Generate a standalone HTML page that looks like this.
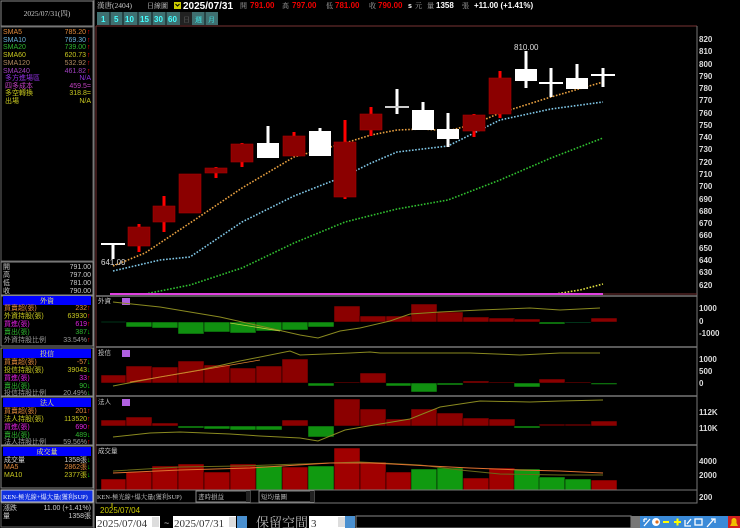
<!DOCTYPE html>
<html><head><meta charset="utf-8"><style>
html,body{margin:0;padding:0;background:#000;width:740px;height:528px;overflow:hidden}
svg{display:block}
text{font-family:"Liberation Sans","Noto Sans CJK TC",sans-serif}
.cj{font-family:"Liberation Serif","Noto Serif CJK SC","Noto Sans CJK TC",serif}
.ax{font-family:"Liberation Serif",serif;font-weight:bold;font-size:8px;fill:#ddd}
</style></head><body>
<svg width="740" height="528" viewBox="0 0 740 528" xmlns="http://www.w3.org/2000/svg" font-size="8">
<rect width="740" height="528" fill="#000"/>
<!-- left panel -->
<rect x="1" y="1" width="92" height="25" fill="#000" stroke="#888"/>
<text x="47" y="16" text-anchor="middle" fill="#ccc" class="cj" font-size="7.5">2025/07/31(四)</text>
<line x1="94" y1="0" x2="94" y2="528" stroke="#888"/>
<rect x="1" y="27" width="92" height="234" fill="none" stroke="#666"/>
<g class="cj" font-size="7">
<text x="3" y="34" fill="#e08a3c">SMA5</text><text x="86" y="34" fill="#e08a3c" text-anchor="end">785.20</text>
<text x="3" y="42" fill="#6ab0d8">SMA10</text><text x="86" y="42" fill="#6ab0d8" text-anchor="end">769.30</text>
<text x="3" y="49" fill="#2fb52f">SMA20</text><text x="86" y="49" fill="#2fb52f" text-anchor="end">739.00</text>
<text x="3" y="57" fill="#c8c820">SMA60</text><text x="86" y="57" fill="#c8c820" text-anchor="end">620.73</text>
<text x="3" y="65" fill="#b08a60">SMA120</text><text x="86" y="65" fill="#b08a60" text-anchor="end">532.92</text>
<text x="3" y="73" fill="#a040c0">SMA240</text><text x="86" y="73" fill="#a040c0" text-anchor="end">461.82</text>
<text x="5" y="80" fill="#9030e0">多方進場區</text><text x="91" y="80" fill="#9030e0" text-anchor="end">N/A</text>
<text x="5" y="88" fill="#c040c0">四多成本</text><text x="91" y="88" fill="#c040c0" text-anchor="end">459.5=</text>
<text x="5" y="95" fill="#c8c820">多空轉換</text><text x="91" y="95" fill="#c8c820" text-anchor="end">318.8=</text>
<text x="5" y="103" fill="#c8c820">出場</text><text x="91" y="103" fill="#c8c820" text-anchor="end">N/A</text>
</g>
<g fill="#f00" font-size="7"><text x="87" y="34">↑</text><text x="87" y="42">↑</text><text x="87" y="49">↑</text><text x="87" y="57">↑</text><text x="87" y="65">↑</text><text x="87" y="73">↑</text></g>
<rect x="1" y="262" width="92" height="33" fill="none" stroke="#888"/>
<g class="cj" font-size="7" fill="#ccc">
<text x="3" y="269">開</text><text x="91" y="269" text-anchor="end">791.00</text>
<text x="3" y="277">高</text><text x="91" y="277" text-anchor="end">797.00</text>
<text x="3" y="285">低</text><text x="91" y="285" text-anchor="end">781.00</text>
<text x="3" y="293">收</text><text x="91" y="293" text-anchor="end">790.00</text>
</g>
<!-- 外資 -->
<rect x="1" y="296" width="92" height="50" fill="none" stroke="#888"/>
<rect x="3" y="296" width="88" height="9" fill="#0000ff"/>
<text x="47" y="303" text-anchor="middle" fill="#ff6" class="cj" font-size="7">外資</text>
<g class="cj" font-size="7">
<text x="4" y="310" fill="#e08a3c">買賣超(張)</text><text x="87" y="310" fill="#e08a3c" text-anchor="end">232</text>
<text x="4" y="318" fill="#c8c820">外資持股(張)</text><text x="87" y="318" fill="#c8c820" text-anchor="end">63930</text>
<text x="4" y="326" fill="#e020e0">買進(張)</text><text x="87" y="326" fill="#e020e0" text-anchor="end">619</text>
<text x="4" y="334" fill="#2fb52f">賣出(張)</text><text x="87" y="334" fill="#2fb52f" text-anchor="end">387</text>
<text x="4" y="342" fill="#999">外資持股比例</text><text x="87" y="342" fill="#999" text-anchor="end">33.54%</text>
</g>
<g font-size="7"><text x="87" y="310" fill="#f00">↑</text><text x="87" y="318" fill="#f00">↑</text><text x="87" y="326" fill="#f00">↑</text><text x="87" y="334" fill="#0c0">↓</text><text x="87" y="342" fill="#f00">↑</text></g>
<!-- 投信 -->
<rect x="1" y="348" width="92" height="48" fill="none" stroke="#888"/>
<rect x="3" y="349" width="88" height="9" fill="#0000ff"/>
<text x="47" y="356" text-anchor="middle" fill="#ff6" class="cj" font-size="7">投信</text>
<g class="cj" font-size="7">
<text x="4" y="364" fill="#e08a3c">買賣超(張)</text><text x="87" y="364" fill="#e08a3c" text-anchor="end">-57</text>
<text x="4" y="372" fill="#c8c820">投信持股(張)</text><text x="87" y="372" fill="#c8c820" text-anchor="end">39043</text>
<text x="4" y="380" fill="#e020e0">買進(張)</text><text x="87" y="380" fill="#e020e0" text-anchor="end">33</text>
<text x="4" y="388" fill="#2fb52f">賣出(張)</text><text x="87" y="388" fill="#2fb52f" text-anchor="end">90</text>
<text x="4" y="395" fill="#999">投信持股比例</text><text x="87" y="395" fill="#999" text-anchor="end">20.49%</text>
</g>
<g font-size="7"><text x="87" y="364" fill="#0c0">↓</text><text x="87" y="372" fill="#0c0">↓</text><text x="87" y="380" fill="#f00">↑</text><text x="87" y="388" fill="#0c0">↓</text><text x="87" y="395" fill="#0c0">↓</text></g>
<!-- 法人 -->
<rect x="1" y="397" width="92" height="48" fill="none" stroke="#888"/>
<rect x="3" y="398" width="88" height="9" fill="#0000ff"/>
<text x="47" y="405" text-anchor="middle" fill="#ff6" class="cj" font-size="7">法人</text>
<g class="cj" font-size="7">
<text x="4" y="413" fill="#e08a3c">買賣超(張)</text><text x="87" y="413" fill="#e08a3c" text-anchor="end">201</text>
<text x="4" y="421" fill="#c8c820">法人持股(張)</text><text x="87" y="421" fill="#c8c820" text-anchor="end">113520</text>
<text x="4" y="429" fill="#e020e0">買進(張)</text><text x="87" y="429" fill="#e020e0" text-anchor="end">690</text>
<text x="4" y="437" fill="#2fb52f">賣出(張)</text><text x="87" y="437" fill="#2fb52f" text-anchor="end">489</text>
<text x="4" y="444" fill="#999">法人持股比例</text><text x="87" y="444" fill="#999" text-anchor="end">59.56%</text>
</g>
<g font-size="7"><text x="87" y="413" fill="#f00">↑</text><text x="87" y="421" fill="#f00">↑</text><text x="87" y="429" fill="#f00">↑</text><text x="87" y="437" fill="#0c0">↓</text><text x="87" y="444" fill="#f00">↑</text></g>
<!-- 成交量 -->
<rect x="1" y="446" width="92" height="42" fill="none" stroke="#888"/>
<rect x="3" y="447" width="88" height="9" fill="#0000ff"/>
<text x="47" y="454" text-anchor="middle" fill="#ff6" class="cj" font-size="7">成交量</text>
<g class="cj" font-size="7">
<text x="4" y="462" fill="#ccc">成交量</text><text x="87" y="462" fill="#ccc" text-anchor="end">1358張</text>
<text x="4" y="469" fill="#e08a3c">MA5</text><text x="87" y="469" fill="#e08a3c" text-anchor="end">2862張</text>
<text x="4" y="477" fill="#c8c820">MA10</text><text x="87" y="477" fill="#c8c820" text-anchor="end">2377張</text>
</g>
<g font-size="7" fill="#0c0"><text x="87" y="462">↓</text><text x="87" y="469">↓</text><text x="87" y="477">↓</text></g>
<rect x="1" y="490" width="92" height="12" fill="#1030e0" stroke="#ccc"/>
<text x="3" y="499" fill="#fff" class="cj" font-size="6.3">KEN-極光線+爆大量(獲利SUP)</text>
<rect x="1" y="503" width="92" height="24" fill="none" stroke="#666"/>
<g class="cj" font-size="7" fill="#ccc"><text x="3" y="510">漲跌</text><text x="91" y="510" text-anchor="end">11.00 (+1.41%)</text><text x="3" y="518">量</text><text x="91" y="518" text-anchor="end">1358張</text></g>

<!-- top bar -->
<text x="97" y="8" fill="#ccc" class="cj" font-size="7.5">漢唐(2404)</text>
<text x="147" y="8" fill="#ccc" class="cj" font-size="7">日線圖</text>
<rect x="174" y="2" width="7" height="7" fill="#cc0"/><path d="M175.5 4 L177.5 6 L179.5 4" stroke="#000" fill="none"/>
<text x="183" y="9" fill="#fff" font-weight="bold" font-size="10">2025/07/31</text>
<text x="240" y="8" fill="#aaa" class="cj" font-size="7">開</text>
<text x="250" y="8" fill="#e00" font-weight="bold" font-size="8">791.00</text>
<text x="282" y="8" fill="#aaa" class="cj" font-size="7">高</text>
<text x="292" y="8" fill="#e00" font-weight="bold" font-size="8">797.00</text>
<text x="326" y="8" fill="#aaa" class="cj" font-size="7">低</text>
<text x="335" y="8" fill="#e00" font-weight="bold" font-size="8">781.00</text>
<text x="369" y="8" fill="#aaa" class="cj" font-size="7">收</text>
<text x="378" y="8" fill="#e00" font-weight="bold" font-size="8">790.00</text>
<text x="408" y="8" fill="#fff" font-weight="bold" font-size="7">s</text>
<text x="415" y="8" fill="#aaa" class="cj" font-size="7">元</text>
<text x="427" y="8" fill="#aaa" class="cj" font-size="7">量</text>
<text x="436" y="8" fill="#fff" font-weight="bold" font-size="8">1358</text>
<text x="462" y="8" fill="#aaa" class="cj" font-size="7">張</text>
<text x="474" y="8" fill="#fff" font-weight="bold" font-size="8">+11.00 (+1.41%)</text>
<!-- buttons -->
<g font-size="8" font-weight="bold" fill="#4ff">
<rect x="97" y="12" width="83" height="13" fill="#3f6f70"/>
<rect x="180" y="12" width="12" height="13" fill="#222"/>
<rect x="192" y="12" width="26" height="13" fill="#3f6f70"/>
<g stroke="#000" stroke-width="0.8"><line x1="110" y1="12" x2="110" y2="25"/><line x1="123" y1="12" x2="123" y2="25"/><line x1="138" y1="12" x2="138" y2="25"/><line x1="152" y1="12" x2="152" y2="25"/><line x1="166" y1="12" x2="166" y2="25"/><line x1="205" y1="12" x2="205" y2="25"/></g>
<text x="101" y="22">1</text><text x="114" y="22">5</text><text x="125" y="22">10</text><text x="140" y="22">15</text><text x="154" y="22">30</text><text x="168" y="22">60</text>
<text x="183" y="22" fill="#666" class="cj" font-weight="normal" font-size="7">日</text>
<text x="195" y="22" class="cj" font-weight="normal" font-size="7">週</text>
<text x="208" y="22" class="cj" font-weight="normal" font-size="7">月</text>
</g>

<!-- main chart frame -->
<line x1="96" y1="26" x2="697" y2="26" stroke="#733"/>
<line x1="96" y1="26" x2="96" y2="490" stroke="#733"/>
<line x1="697" y1="26" x2="697" y2="503" stroke="#777"/>
<g class="ax">
<text x="699" y="42">820</text><text x="699" y="54">810</text><text x="699" y="67">800</text><text x="699" y="79">790</text><text x="699" y="91">780</text><text x="699" y="103">770</text><text x="699" y="116">760</text><text x="699" y="128">750</text><text x="699" y="140">740</text><text x="699" y="152">730</text><text x="699" y="165">720</text><text x="699" y="177">710</text><text x="699" y="189">700</text><text x="699" y="202">690</text><text x="699" y="214">680</text><text x="699" y="226">670</text><text x="699" y="238">660</text><text x="699" y="251">650</text><text x="699" y="263">640</text><text x="699" y="275">630</text><text x="699" y="288">620</text>
</g>
<!-- MAs -->
<g fill="none" stroke-width="1.6" stroke-dasharray="1.6 1.6">
<polyline stroke="#e8a040" points="113,266 145,253 190,223 242,188 294,157 345,143 371,135 397,130 423,129 448,131 474,124 500,113 551,97 603,82"/>
<polyline stroke="#80c8e8" points="113,271 160,260 190,257 242,222 294,196 345,176 371,163 397,152 448,146 500,120 551,109 603,102"/>
<polyline stroke="#30c030" points="145,294 190,285 242,268 294,243 345,222 397,209 448,200 500,180 551,158 603,138"/>
<polyline stroke="#e0e040" points="555,294 580,290 603,284"/>
</g>
<!-- candles -->
<g fill="#f00">
<rect x="137.5" y="224" width="3" height="28"/><rect x="162.5" y="196" width="3" height="36"/><rect x="214.5" y="167" width="3" height="11"/><rect x="240.5" y="143" width="3" height="24"/><rect x="292.5" y="132" width="3" height="24"/><rect x="343.5" y="120" width="3" height="79"/><rect x="369.5" y="107" width="3" height="29"/><rect x="472.5" y="114" width="3" height="23"/><rect x="498.5" y="71" width="3" height="47"/>
</g>
<g fill="#8b0000" stroke="#a00" stroke-width="0.6">
<rect x="128" y="227" width="22" height="19"/><rect x="153" y="206" width="22" height="16"/><rect x="179" y="174" width="22" height="39"/><rect x="205" y="168" width="22" height="5"/><rect x="231" y="144" width="22" height="18"/><rect x="283" y="136" width="22" height="20"/><rect x="334" y="142" width="22" height="55"/><rect x="360" y="114" width="22" height="16"/><rect x="463" y="115" width="22" height="16"/><rect x="489" y="78" width="22" height="36"/>
</g>
<g fill="#fff">
<rect x="101" y="243" width="24" height="2"/><rect x="111.5" y="243" width="3" height="16"/>
<rect x="266.5" y="126" width="3" height="32"/><rect x="257" y="143" width="22" height="15"/>
<rect x="318.5" y="128" width="3" height="28"/><rect x="309" y="131" width="22" height="25"/>
<rect x="395.5" y="89" width="3" height="25"/><rect x="385" y="106" width="24" height="2" fill="#ccc"/>
<rect x="421.5" y="102" width="3" height="28"/><rect x="412" y="110" width="22" height="20"/>
<rect x="446.5" y="113" width="3" height="34"/><rect x="437" y="129" width="22" height="10"/>
<rect x="524.5" y="51" width="3" height="37"/><rect x="515" y="69" width="22" height="12"/>
<rect x="549.5" y="68" width="3" height="29"/><rect x="539" y="82" width="24" height="2"/>
<rect x="575.5" y="64" width="3" height="25"/><rect x="566" y="78" width="22" height="11"/>
<rect x="601.5" y="68" width="3" height="19"/><rect x="591" y="74" width="24" height="2"/>
</g>
<text x="514" y="50" fill="#ddd" font-size="8">810.00</text>
<text x="101" y="265" fill="#ddd" font-size="8">641.00</text>
<line x1="110" y1="294" x2="603" y2="294" stroke="#e040e0" stroke-width="2"/>
<line x1="603" y1="294" x2="697" y2="294" stroke="#733"/>

<!-- panel separators -->
<g stroke="#777" stroke-width="1.5"><line x1="96" y1="296" x2="697" y2="296"/><line x1="96" y1="347" x2="697" y2="347"/><line x1="96" y1="396" x2="697" y2="396"/><line x1="96" y1="445" x2="697" y2="445"/></g>
<g class="cj" font-size="6.5" fill="#ccc"><text x="98" y="303">外資</text><text x="98" y="355">投信</text><text x="98" y="404">法人</text><text x="98" y="453">成交量</text></g>
<g fill="#b060e0"><rect x="122" y="298" width="8" height="7"/><rect x="122" y="350" width="8" height="7"/><rect x="122" y="399" width="8" height="7"/></g>
<!-- 外資 bars zero 322 -->
<g stroke="#000" stroke-width="0.5">
<rect x="101" y="321.5" width="25" height="1" fill="#063"/>
<g fill="#109010"><rect x="126" y="322" width="26" height="5"/><rect x="152" y="322" width="26" height="6"/><rect x="178" y="322" width="26" height="12"/><rect x="204" y="322" width="26" height="10"/><rect x="230" y="322" width="26" height="11"/><rect x="256" y="322" width="26" height="9"/><rect x="282" y="322" width="26" height="8"/><rect x="308" y="322" width="26" height="5"/><rect x="539" y="322" width="26" height="2"/><rect x="565" y="322" width="26" height="1" fill="#063"/></g>
<g fill="#8b0000"><rect x="334" y="306" width="26" height="16"/><rect x="360" y="316" width="26" height="6"/><rect x="386" y="316" width="26" height="6"/><rect x="411" y="304" width="26" height="18"/><rect x="437" y="312" width="26" height="10"/><rect x="463" y="317" width="26" height="5"/><rect x="489" y="318" width="26" height="4"/><rect x="514" y="319" width="26" height="3"/><rect x="591" y="318" width="26" height="4"/></g>
</g>
<polyline fill="none" stroke="#8a8a20" points="113,302 160,307 220,317 300,335 318,338 340,331 360,328 390,321 410,314 440,312 480,310 530,308 560,310 600,308"/>
<polyline fill="none" stroke="#c0d040" stroke-width="0.8" points="230,323 280,331"/>
<g class="ax"><text x="699" y="311">1000</text><text x="699" y="324">0</text><text x="699" y="336">-1000</text></g>
<!-- 投信 zero 383 -->
<g stroke="#000" stroke-width="0.5">
<g fill="#8b0000"><rect x="101" y="375" width="25" height="8"/><rect x="126" y="366" width="26" height="17"/><rect x="152" y="367" width="26" height="16"/><rect x="178" y="361" width="26" height="22"/><rect x="204" y="365" width="26" height="18"/><rect x="230" y="368" width="26" height="15"/><rect x="256" y="366" width="26" height="17"/><rect x="282" y="359" width="26" height="24"/><rect x="334" y="382" width="26" height="1"/><rect x="360" y="373" width="26" height="10"/><rect x="463" y="381" width="26" height="2"/><rect x="489" y="382" width="26" height="1"/><rect x="539" y="379" width="26" height="4"/><rect x="565" y="382" width="26" height="1"/></g>
<g fill="#109010"><rect x="308" y="383" width="26" height="3"/><rect x="386" y="383" width="26" height="3"/><rect x="411" y="383" width="26" height="9"/><rect x="437" y="383" width="26" height="2"/><rect x="514" y="383" width="26" height="4"/><rect x="591" y="383" width="26" height="1.5"/></g>
</g>
<polyline fill="none" stroke="#8a8a20" points="113,386 160,377 200,370 240,361 290,351 300,355 350,353 370,352 380,353 470,353 520,355 560,353 600,353"/>
<polyline fill="none" stroke="#e08030" stroke-width="0.8" points="130,382 190,372 260,360"/>
<g class="ax"><text x="699" y="362">1000</text><text x="699" y="374">500</text><text x="699" y="386">0</text></g>
<!-- 法人 zero 426 -->
<g stroke="#000" stroke-width="0.5">
<g fill="#8b0000"><rect x="101" y="420" width="25" height="6"/><rect x="126" y="417" width="26" height="9"/><rect x="152" y="423" width="26" height="3"/><rect x="282" y="420" width="26" height="6"/><rect x="334" y="399" width="26" height="27"/><rect x="360" y="409" width="26" height="17"/><rect x="386" y="419" width="26" height="7"/><rect x="411" y="409" width="26" height="17"/><rect x="437" y="413" width="26" height="13"/><rect x="463" y="418" width="26" height="8"/><rect x="489" y="419" width="26" height="7"/><rect x="539" y="424" width="26" height="2" fill="#600"/><rect x="565" y="424" width="26" height="2" fill="#600"/><rect x="591" y="421" width="26" height="5"/></g>
<g fill="#109010"><rect x="178" y="426" width="26" height="2"/><rect x="204" y="426" width="26" height="3"/><rect x="230" y="426" width="26" height="4"/><rect x="256" y="426" width="26" height="4"/><rect x="308" y="426" width="26" height="11"/><rect x="514" y="426" width="26" height="2"/></g>
</g>
<polyline fill="none" stroke="#8a8a20" points="113,437 150,433 180,432 230,434 260,436 300,438 318,441 345,430 380,424 410,419 440,407 480,401 530,402 560,401 603,400"/>
<g class="ax"><text x="699" y="415">112K</text><text x="699" y="431">110K</text></g>
<!-- volume -->
<g stroke="#000" stroke-width="0.5">
<g fill="#a00000"><rect x="101" y="479" width="25" height="11"/><rect x="126" y="472" width="26" height="18"/><rect x="152" y="466" width="26" height="24"/><rect x="178" y="464" width="26" height="26"/><rect x="204" y="472" width="26" height="18"/><rect x="230" y="464" width="26" height="26"/><rect x="282" y="467" width="26" height="23"/><rect x="334" y="448" width="26" height="42"/><rect x="360" y="462" width="26" height="28"/><rect x="386" y="472" width="26" height="18"/><rect x="463" y="478" width="26" height="12"/><rect x="489" y="468" width="26" height="22"/><rect x="591" y="480" width="26" height="10"/></g>
<g fill="#109a10"><rect x="256" y="466" width="26" height="24"/><rect x="308" y="466" width="26" height="24"/><rect x="411" y="469" width="26" height="21"/><rect x="437" y="468" width="26" height="22"/><rect x="514" y="469" width="26" height="21"/><rect x="539" y="477" width="26" height="13"/><rect x="565" y="479" width="26" height="11"/></g>
</g>
<polyline fill="none" stroke="#6a6a18" points="113,471 180,467 240,466 300,464 360,462 420,465 460,470 500,474 560,475 603,475"/>
<polyline fill="none" stroke="#e07030" points="113,473 180,470 250,468 330,463 370,463 392,464 430,466 470,468 520,470 560,471 603,473"/>
<g class="ax"><text x="699" y="464">4000</text><text x="699" y="478">2000</text><text x="699" y="500">200</text></g>

<!-- bottom strip -->
<rect x="96" y="490" width="601" height="13" fill="#000" stroke="#777"/>
<text x="97" y="499" fill="#ccc" class="cj" font-size="6.3">KEN-極光線+爆大量(獲利SUP)</text>
<rect x="196" y="491" width="54" height="11" fill="#000" stroke="#888"/><text x="198" y="499" fill="#ccc" class="cj" font-size="6.5">晝時損益</text><rect x="246" y="491" width="4" height="11" fill="#222"/>
<rect x="259" y="491" width="55" height="11" fill="#000" stroke="#888"/><text x="261" y="499" fill="#ccc" class="cj" font-size="6.5">短均量圖</text><rect x="310" y="491" width="4" height="11" fill="#222"/>
<line x1="112" y1="503" x2="112" y2="507" stroke="#cc0"/>
<text x="100" y="513" fill="#cc0" font-size="8">2025/07/04</text>
<!-- controls -->
<rect x="96" y="516" width="64" height="12" fill="#fff"/><text x="97" y="527" fill="#333" style="font-family:'Liberation Serif',serif;font-size:11px">2025/07/04</text><rect x="152" y="517" width="7" height="10" fill="#ddd"/>
<text x="164" y="526" fill="#ccc" font-size="9">~</text>
<rect x="173" y="516" width="63" height="12" fill="#fff"/><text x="174" y="527" style="font-family:'Liberation Serif',serif;font-size:11px" fill="#333">2025/07/31</text><rect x="229" y="517" width="7" height="10" fill="#ddd"/>
<rect x="237" y="516" width="10" height="12" fill="#4a90d0"/>
<text x="256" y="527" fill="#bbb" class="cj" style="font-size:13px">保留空間</text>
<rect x="309" y="516" width="36" height="12" fill="#fff"/><text x="311" y="527" style="font-family:'Liberation Serif',serif;font-size:11px" fill="#333">3</text><rect x="338" y="517" width="7" height="10" fill="#ddd"/>
<rect x="345" y="516" width="10" height="12" fill="#4a90d0"/>
<rect x="356" y="516" width="275" height="12" fill="#000" stroke="#888"/>
<rect x="631" y="516" width="9" height="12" fill="#777"/>
<rect x="640" y="516" width="88" height="12" fill="#3a8ad8"/>
<g stroke="#fff" stroke-width="1.3" fill="none">
<path d="M644 526 L650 519 M644 519 L644 522 M644 519 L647 519"/>
<circle cx="656" cy="522" r="4" fill="#fff" stroke="none"/><circle cx="657" cy="522" r="1.6" fill="#e07020" stroke="none"/>
<line x1="663" y1="522" x2="669" y2="522" stroke="#ff0" stroke-width="2"/>
<path d="M674 522 H681 M677.5 518.5 V525.5" stroke="#ff0" stroke-width="2"/>
<path d="M685 520 V526 H691 M687 524 L691 519"/>
<rect x="695" y="519" width="7" height="6"/>
<path d="M707 527 L714 519 M711 519 H715 V523"/>
</g>
<rect x="728" y="516" width="12" height="12" fill="#d02020"/>
<path d="M730 526 H738 L736.5 523 V520.5 A2.5 2.5 0 0 0 731.5 520.5 V523 Z" fill="#f0c000"/>
</svg>
</body></html>
